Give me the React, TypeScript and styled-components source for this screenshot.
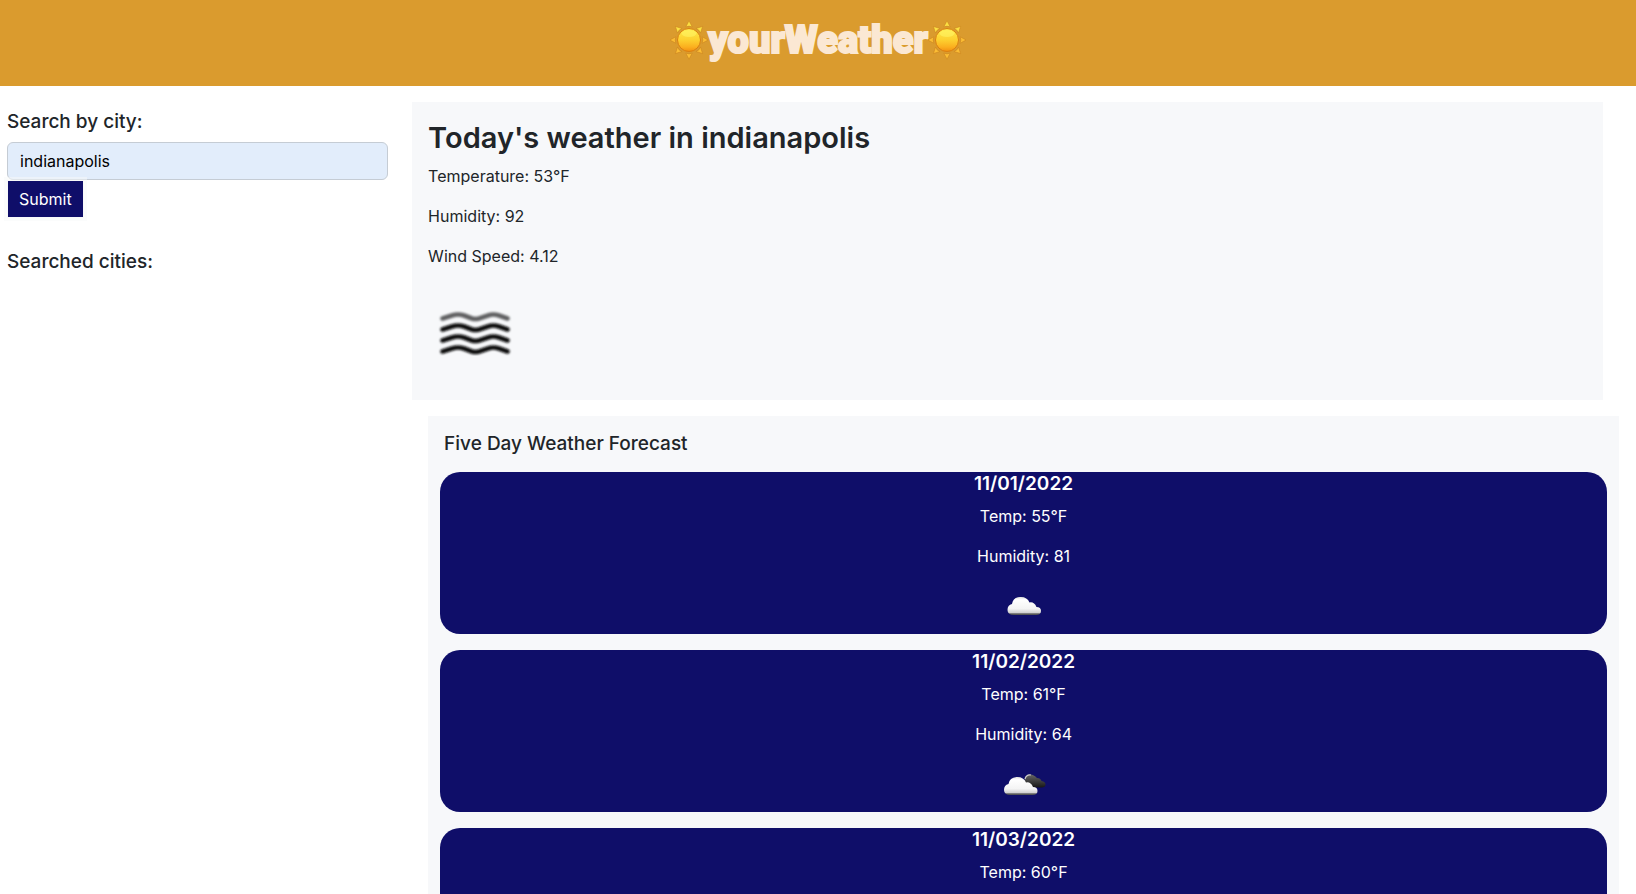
import React, { useState } from "react";
import styled, { createGlobalStyle } from "styled-components";

const GlobalStyle = createGlobalStyle`
  *, *::before, *::after { box-sizing: border-box; }
  body {
    margin: 0;
    background: #fff;
    color: #212529;
    font-family: Inter, "Liberation Sans", sans-serif;
    font-size: 16px;
    line-height: 24px;
  }
  h1, h2, h3, p { margin: 0; }
`;

const Page = styled.div`
  height: 100vh;
  overflow: hidden;
`;

const Header = styled.header`
  display: flex;
  justify-content: center;
  height: 86px;
  padding-top: 16px;
  background: #da9b2e;
`;

const Brand = styled.h1`
  display: flex;
  align-items: center;
  height: 48px;
  color: #fbe8d3;
  font-family: Roboto, "Liberation Sans", sans-serif;
  font-size: 38px;
  font-weight: 900;
  line-height: 48px;
  -webkit-text-stroke: 2px #fbe8d3;
`;

const Columns = styled.div`
  display: grid;
  grid-template-columns: 6fr 19fr;
  gap: 24px;
  padding: 16px 17px 0 7px;
`;

const Sidebar = styled.aside`
  padding-top: 8px;
`;

const SearchForm = styled.form`
  display: flex;
  flex-direction: column;
  align-items: flex-start;
  margin-bottom: 32px;
`;

const SearchLabel = styled.label`
  margin-bottom: 8px;
  font-size: 19px;
  font-weight: 500;
  line-height: 24px;
`;

const SearchInput = styled.input`
  width: 100%;
  height: 38px;
  padding: 6px 12px;
  border: 1px solid #c5ccd4;
  border-radius: 6px;
  background: #e2edfb;
  color: #000;
  font: inherit;
`;

const SubmitButton = styled.button`
  height: 38px;
  padding: 6px 11px;
  border: 1px solid #f8f9fa;
  background: #0f0e69;
  box-shadow: 0 0 0 3px rgba(248, 249, 250, 0.5);
  color: #fff;
  font: inherit;
  line-height: 24px;
`;

const SectionTitle = styled.h3`
  font-size: 19px;
  font-weight: 500;
  line-height: 24px;
`;

const Today = styled.section`
  display: flex;
  flex-direction: column;
  gap: 16px;
  margin: 0 16px 16px 0;
  padding: 16px;
  background: #f7f8fa;
`;

const TodayTitle = styled.h2`
  margin-bottom: -10px;
  font-size: 29px;
  font-weight: 600;
  line-height: 40px;
`;

const Forecast = styled.section`
  margin-left: 16px;
  padding: 16px 12px;
  background: #f7f8fa;

  > ${SectionTitle} {
    padding: 0 4px 16px;
  }
`;

const DayCard = styled.article`
  display: flex;
  flex-direction: column;
  align-items: center;
  min-height: 162px;
  margin-bottom: 16px;
  border-radius: 20px;
  background: #0f0e69;
  color: #fff;
`;

const DayDate = styled.h3`
  margin-bottom: 8px;
  font-size: 19px;
  font-weight: 600;
  line-height: 24px;
`;

const DayReading = styled.p`
  margin-bottom: 16px;
`;

const Sun = ({ id }: { id: string }) => (
  <svg width="38" height="40" viewBox="0 0 38 40" aria-hidden="true">
    <defs>
      <linearGradient id={id} x1="0" y1="0" x2="0" y2="1">
        <stop offset="0" stopColor="#fee94a" />
        <stop offset="0.5" stopColor="#fdd02f" />
        <stop offset="0.8" stopColor="#fbb01f" />
        <stop offset="1" stopColor="#f3900f" />
      </linearGradient>
    </defs>
    <g stroke="#c9801d" strokeWidth="0.5">
      {[0, 45, 90, 135, 180, 225, 270, 315].map((a) => (
        <path
          key={a}
          d="M19 0.800L22.200 7Q19 5.200 15.800 7Z"
          fill={a > 270 || a < 90 ? "#fbe043" : "#fbbd35"}
          transform={`rotate(${a} 19 20)`}
        />
      ))}
    </g>
    <circle cx="19" cy="20" r="11.500" fill={`url(#${id})`} stroke="#d97f12" strokeWidth="1" />
    <ellipse cx="19" cy="13.500" rx="7.500" ry="3.500" fill="#fff76a" opacity="0.5" />
  </svg>
);

const Mist = () => (
  <svg width="100" height="100" viewBox="0 0 100 100" role="img" aria-label="Mist">
    <defs>
      <filter id="mistSoft" x="-10%" y="-10%" width="120%" height="120%">
        <feGaussianBlur stdDeviation="0.9" />
      </filter>
    </defs>
    <g fill="none" strokeWidth="4.600" strokeLinecap="round" strokeLinejoin="round" filter="url(#mistSoft)">
      {[34.5, 45.5, 56.5, 67.5].map((y, i) => (
        <path
          key={y}
          d={`M14.5 ${y}L24 ${y - 3}Q30 ${y - 5} 36 ${y - 3}L44 ${y}Q47 ${y + 1} 51 ${y}L60 ${y - 3}Q65 ${y - 5} 71 ${y - 3}L79.5 ${y}`}
          stroke={i === 0 ? "#606162" : "#0c0c0c"}
        />
      ))}
    </g>
  </svg>
);

const cloudPath =
  "M14 31H36Q41 31 41 27Q41 23 36.5 23Q34 17.500 29.500 18.500Q27 12.500 20 13Q13 13.500 12 20Q7.500 21 7.500 26Q7.500 31 14 31Z";

const Cloud = ({ kind }: { kind: "cloud" | "broken" }) => (
  <svg width="50" height="50" viewBox="0 0 50 50" role="img" aria-label={kind === "cloud" ? "Cloudy" : "Broken clouds"}>
    <defs>
      <linearGradient id={`light-${kind}`} x1="0" y1="0" x2="0" y2="1">
        <stop offset="0" stopColor="#dedede" />
        <stop offset="0.15" stopColor="#fff" />
        <stop offset="0.65" stopColor="#f4f4f4" />
        <stop offset="0.88" stopColor="#cfcfcf" />
        <stop offset="0.92" stopColor="#777" />
        <stop offset="1" stopColor="#444" />
      </linearGradient>
      <linearGradient id={`dark-${kind}`} x1="0" y1="0" x2="0" y2="1">
        <stop offset="0" stopColor="#666" />
        <stop offset="1" stopColor="#171717" />
      </linearGradient>
    </defs>
    {kind === "broken" ? (
      <g transform="translate(0.5 1.5)">
        <path
          d="M27 24H42Q46 24 46 21Q46 18 42 17.500Q41 14.500 37.500 14.500Q34 10.500 30 11Q25 11.500 25 17Z"
          fill="url(#dark-broken)"
        />
        <path d="M25.500 15.500Q27 10.500 31.500 11.500" fill="none" stroke="#ccc" strokeWidth="1.200" />
        <path d={cloudPath} fill="url(#light-broken)" transform="translate(-3 0.500)" />
      </g>
    ) : (
      <path d={cloudPath} fill="url(#light-cloud)" transform="translate(1 0)" />
    )}
  </svg>
);

type Day = { date: string; temp: number; humidity?: number; icon?: "cloud" | "broken" };

const days: Day[] = [
  { date: "11/01/2022", temp: 55, humidity: 81, icon: "cloud" },
  { date: "11/02/2022", temp: 61, humidity: 64, icon: "broken" },
  { date: "11/03/2022", temp: 60 },
];

export default function App() {
  const [city, setCity] = useState("indianapolis");

  return (
    <Page>
      <GlobalStyle />
      <Header>
        <Brand>
          <Sun id="sunLeft" />
          yourWeather
          <Sun id="sunRight" />
        </Brand>
      </Header>
      <Columns>
        <Sidebar>
          <SearchForm onSubmit={(e) => e.preventDefault()}>
            <SearchLabel htmlFor="city">Search by city:</SearchLabel>
            <SearchInput id="city" type="text" value={city} onChange={(e) => setCity(e.target.value)} />
            <SubmitButton type="submit">Submit</SubmitButton>
          </SearchForm>
          <SectionTitle>Searched cities:</SectionTitle>
        </Sidebar>
        <main>
          <Today>
            <TodayTitle>Today's weather in indianapolis</TodayTitle>
            <p>Temperature: 53°F</p>
            <p>Humidity: 92</p>
            <p>Wind Speed: 4.12</p>
            <Mist />
          </Today>
          <Forecast>
            <SectionTitle>Five Day Weather Forecast</SectionTitle>
            {days.map((day) => (
              <DayCard key={day.date}>
                <DayDate>{day.date}</DayDate>
                <DayReading>Temp: {day.temp}°F</DayReading>
                {day.humidity !== undefined && <DayReading>Humidity: {day.humidity}</DayReading>}
                {day.icon && <Cloud kind={day.icon} />}
              </DayCard>
            ))}
          </Forecast>
        </main>
      </Columns>
    </Page>
  );
}
